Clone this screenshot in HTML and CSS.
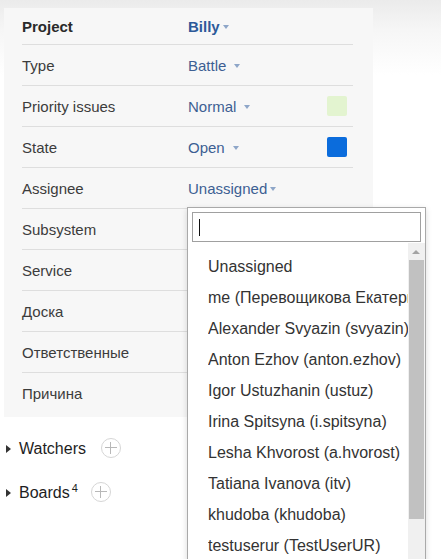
FILE: index.html
```html
<!DOCTYPE html>
<html>
<head>
<meta charset="utf-8">
<link rel="stylesheet" href="styles.css">
</head>
<body>
<div class="page">
  <div class="panel">
    <div class="row first">
      <div class="label bold">Project</div>
      <div class="value bold">Billy<span class="caret tight"></span></div>
    </div>
    <div class="row">
      <div class="label">Type</div>
      <div class="value">Battle<span class="caret"></span></div>
    </div>
    <div class="row">
      <div class="label">Priority issues</div>
      <div class="value">Normal<span class="caret"></span></div>
      <span class="swatch green"></span>
    </div>
    <div class="row">
      <div class="label">State</div>
      <div class="value">Open<span class="caret"></span></div>
      <span class="swatch blue"></span>
    </div>
    <div class="row">
      <div class="label">Assignee</div>
      <div class="value">Unassigned<span class="caret tight"></span></div>
    </div>
    <div class="row">
      <div class="label">Subsystem</div>
    </div>
    <div class="row">
      <div class="label">Service</div>
    </div>
    <div class="row">
      <div class="label">Доска</div>
    </div>
    <div class="row">
      <div class="label">Ответственные</div>
    </div>
    <div class="row last">
      <div class="label">Причина</div>
    </div>
  </div>

  <div class="sections">
    <div class="section">
      <span class="tri"></span><span class="sec-title">Watchers</span><span class="plus"></span>
    </div>
    <div class="section">
      <span class="tri"></span><span class="sec-title">Boards<sup>4</sup></span><span class="plus boards"></span>
    </div>
  </div>

  <div class="dropdown">
    <div class="search"><span class="cursor"></span></div>
    <div class="listwrap">
      <ul class="list">
        <li>Unassigned</li>
        <li>me (Перевощикова Екатерина)</li>
        <li>Alexander Svyazin (svyazin)</li>
        <li>Anton Ezhov (anton.ezhov)</li>
        <li>Igor Ustuzhanin (ustuz)</li>
        <li>Irina Spitsyna (i.spitsyna)</li>
        <li>Lesha Khvorost (a.hvorost)</li>
        <li>Tatiana Ivanova (itv)</li>
        <li>khudoba (khudoba)</li>
        <li>testuserur (TestUserUR)</li>
      </ul>
      <div class="scrollbar">
        <span class="arrow"></span>
        <span class="thumb"></span>
      </div>
    </div>
  </div>
</div>
</body>
</html>
```

FILE: styles.css
```css
html, body {
  margin: 0;
  padding: 0;
  height: 100%;
  overflow: hidden;
}
body {
  background: linear-gradient(#ebebeb 0, #f6f6f6 30px, #ffffff 75px);
  font-family: "Liberation Sans", Arial, sans-serif;
  color: #333;
}
.page {
  position: relative;
  height: 559px;
  box-sizing: border-box;
  padding-top: 8px;
  overflow: hidden;
}
.panel {
  margin-left: 4px;
  width: 369px;
  background: #f7f7f7;
  padding-bottom: 4px;
}
.row {
  display: flex;
  align-items: center;
  height: 40px;
  margin: 0 20px 0 18px;
  border-bottom: 1px solid #dedede;
  font-size: 15px;
}
.row.first { height: 36px; }
.row.last { border-bottom: none; }
.label {
  width: 166px;
  flex: none;
  color: #3c3c3c;
}
.bold { font-weight: bold; }
.label.bold { color: #2a2a2a; }
.value {
  flex: 1;
  color: #3d5f93;
  display: flex;
  align-items: center;
}
.value.bold { color: #2d5a99; }
.caret {
  display: inline-block;
  width: 0;
  height: 0;
  border-left: 3.5px solid transparent;
  border-right: 3.5px solid transparent;
  border-top: 4px solid #8ea6c8;
  margin-left: 8px;
  margin-top: 1px;
}
.caret.tight { margin-left: 3px; }
.swatch {
  width: 20px;
  height: 20px;
  border-radius: 2px;
  margin-right: 6px;
  flex: none;
}
.swatch.green { background: #e3f4d0; }
.swatch.blue { background: #0b6cdc; }

.sections {
  margin-top: 10px;
}
.section {
  display: flex;
  align-items: center;
  height: 44px;
  padding-left: 6px;
  font-size: 16px;
  color: #1e1e1e;
}
.tri {
  width: 0;
  height: 0;
  border-top: 4px solid transparent;
  border-bottom: 4px solid transparent;
  border-left: 5px solid #333;
  margin-right: 8px;
}
.sec-title sup {
  font-size: 11px;
  vertical-align: 6px;
  margin-left: 2px;
  line-height: 0;
}
.plus {
  position: relative;
  width: 20px;
  height: 20px;
  border: 1px solid #d6d6d6;
  border-radius: 50%;
  margin-left: 15px;
  margin-top: -3px;
  box-sizing: border-box;
  background: #fff;
}
.plus.boards { margin-left: 13px; }
.plus::before, .plus::after {
  content: "";
  position: absolute;
  background: #b8b8b8;
}
.plus::before { left: 3px; right: 3px; top: 8.5px; height: 1px; }
.plus::after { top: 3px; bottom: 3px; left: 8.5px; width: 1px; }

.dropdown {
  position: absolute;
  left: 187px;
  top: 207px;
  width: 239px;
  height: 380px;
  box-sizing: border-box;
  border: 1px solid #a9a9a9;
  background: #fff;
  box-shadow: 0 2px 6px rgba(0,0,0,0.15);
  padding: 4px 0 0 4px;
}
.search {
  width: 229px;
  height: 30px;
  box-sizing: border-box;
  border: 1px solid #a0a0a0;
  background: #fff;
  position: relative;
}
.cursor {
  position: absolute;
  left: 6px;
  top: 6px;
  width: 1px;
  height: 17px;
  background: #111;
}
.listwrap {
  display: flex;
  margin: 1px 0 0 -4px;
  height: 340px;
}
.list {
  list-style: none;
  margin: 0;
  padding: 8px 0 0 20px;
  flex: 1;
  overflow: hidden;
  white-space: nowrap;
  font-size: 16px;
  color: #333;
}
.list li {
  height: 31px;
  line-height: 31px;
  overflow: hidden;
}
.scrollbar {
  width: 17px;
  flex: none;
  background: #f0f0f0;
  position: relative;
}
.arrow {
  position: absolute;
  left: 4px;
  top: 7px;
  width: 0;
  height: 0;
  border-left: 4px solid transparent;
  border-right: 4px solid transparent;
  border-bottom: 4px solid #a3a3a3;
}
.thumb {
  position: absolute;
  left: 1px;
  right: 1px;
  top: 17px;
  height: 259px;
  background: #c1c1c1;
}
```
